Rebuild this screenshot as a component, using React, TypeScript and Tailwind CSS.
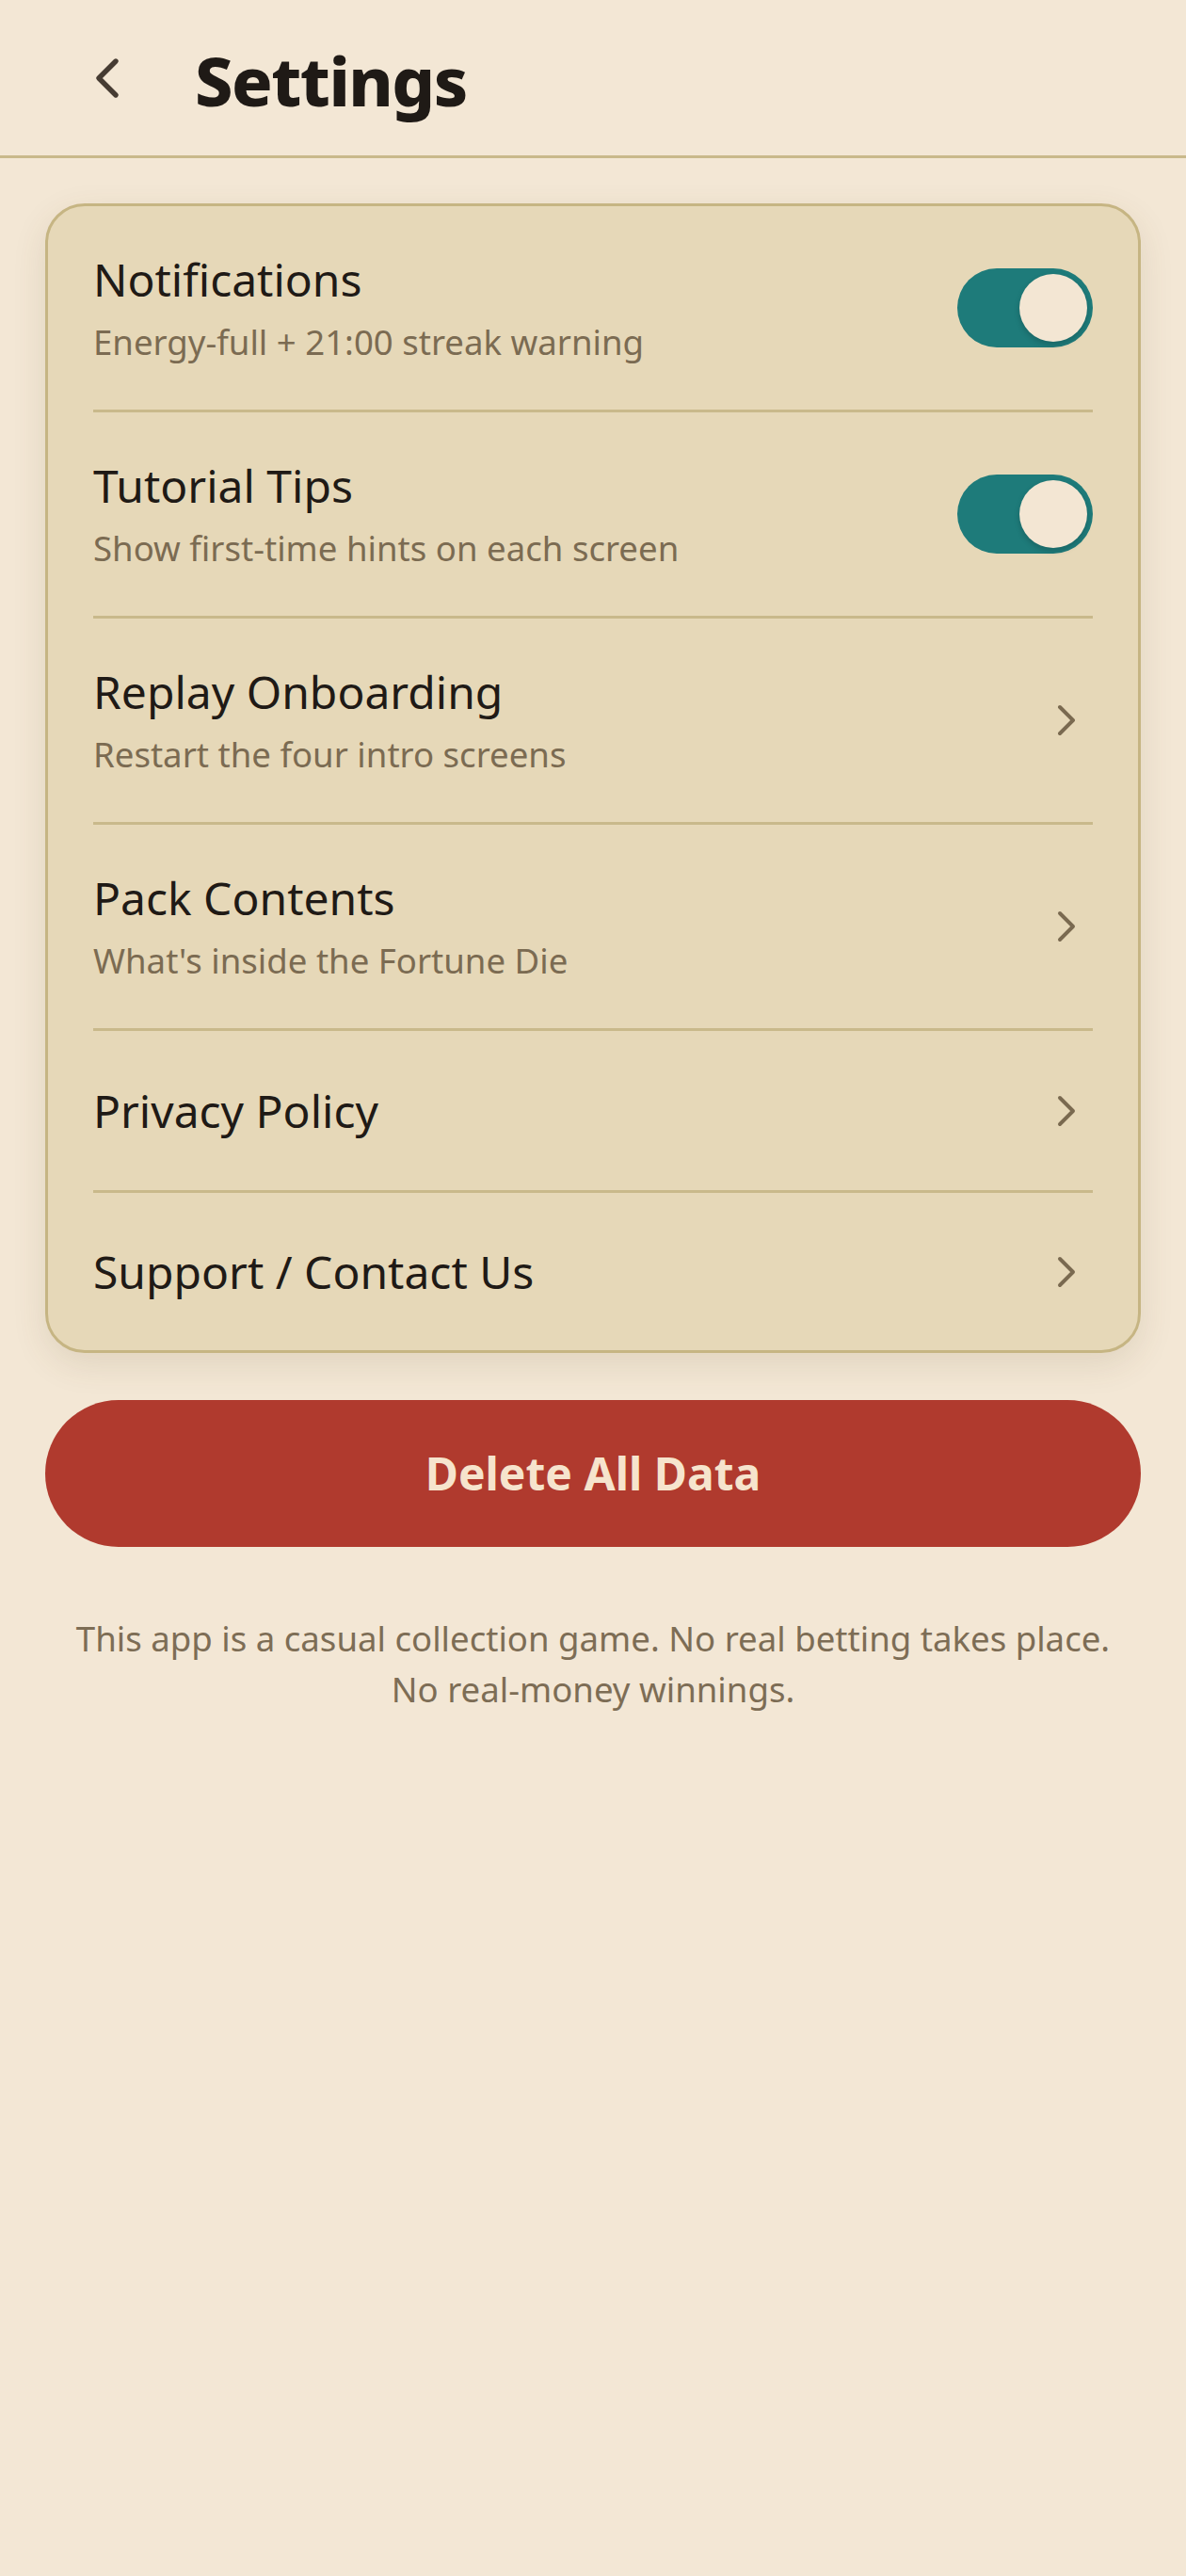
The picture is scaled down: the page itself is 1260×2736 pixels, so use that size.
import React from "react";

const FONT = { fontFamily: '"Noto Sans", "Open Sans", sans-serif' };

function Toggle() {
  return (
    <div className="relative w-[144px] h-[84px] rounded-full bg-[#1e7b7a] shrink-0">
      <div className="absolute right-[6px] top-[6px] w-[72px] h-[72px] rounded-full bg-[#f3e6d3] shadow-[0_3px_6px_rgba(0,0,0,0.18)]" />
    </div>
  );
}

function Chevron() {
  return (
    <svg width="56" height="56" viewBox="0 0 24 24" fill="none" stroke="#7a6a50" strokeWidth="1.7" strokeLinecap="round" strokeLinejoin="round" className="shrink-0">
      <path d="m9 18 6-6-6-6" />
    </svg>
  );
}

type Row = { title: string; sub?: string; kind: "toggle" | "link" };

const rows: Row[] = [
  { title: "Notifications", sub: "Energy-full + 21:00 streak warning", kind: "toggle" },
  { title: "Tutorial Tips", sub: "Show first-time hints on each screen", kind: "toggle" },
  { title: "Replay Onboarding", sub: "Restart the four intro screens", kind: "link" },
  { title: "Pack Contents", sub: "What's inside the Fortune Die", kind: "link" },
  { title: "Privacy Policy", kind: "link" },
  { title: "Support / Contact Us", kind: "link" },
];

export default function App() {
  return (
    <div className="min-h-screen w-full bg-[#f3e7d5]" style={FONT}>
      <header className="h-[168px] flex items-center pl-[78px] gap-[57px] border-b-[3px] border-[#c9b98b]">
        <svg width="72" height="72" viewBox="0 0 24 24" fill="none" stroke="#463c33" strokeWidth="1.8" strokeLinecap="round" strokeLinejoin="round">
          <path d="m15 18-6-6 6-6" />
        </svg>
        <h1 className="text-[72px] leading-[90px] font-extrabold text-[#1f1a16] tracking-[-1.5px] mt-[4px]">Settings</h1>
      </header>

      <div className="mx-[48px] mt-[48px] rounded-[42px] border-[3px] border-[#c6b583] bg-[#e6d8b8] px-[48px] shadow-[0_12px_36px_rgba(90,70,30,0.12)]">
        {rows.map((r, i) => {
          const last = i === rows.length - 1;
          return (
            <div
              key={r.title}
              className={`flex items-center justify-between py-[48px] ${last ? "min-h-[167px]" : "min-h-[172px] border-b-[3px] border-[#c9b98b]"}`}
            >
              <div className="flex flex-col gap-[12px]">
                <div className="text-[48px] leading-[60px] text-[#1f1a16]">{r.title}</div>
                {r.sub && <div className="text-[36.6px] leading-[48px] text-[#7b6b52]">{r.sub}</div>}
              </div>
              {r.kind === "toggle" ? <Toggle /> : <Chevron />}
            </div>
          );
        })}
      </div>

      <div className="mx-[48px] mt-[50px] h-[156px] rounded-full bg-[#b03a2e] flex items-center justify-center">
        <span className="text-[48px] font-bold text-[#f6e4cd]">Delete All Data</span>
      </div>

      <p className="mt-[70px] px-[48px] text-center text-[36.6px] leading-[54px] text-[#7d6d55]">
        This app is a casual collection game. No real betting takes place.
        <br />
        No real-money winnings.
      </p>
    </div>
  );
}
